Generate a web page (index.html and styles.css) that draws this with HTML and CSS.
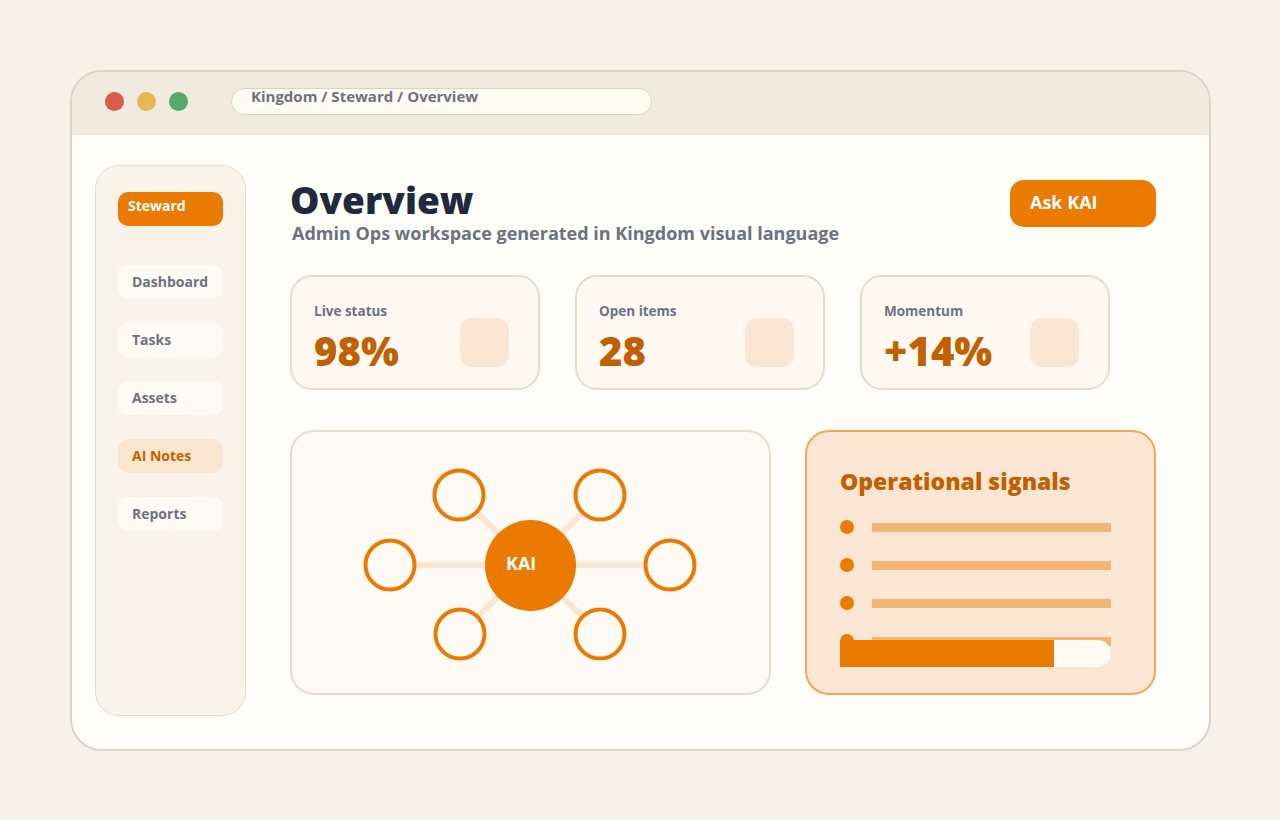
FILE: index.html
```html
<!DOCTYPE html>
<html lang="en">
<head>
    <meta charset="UTF-8">
    <meta name="viewport" content="width=device-width, initial-scale=1.0">
    <title>Kingdom / Steward / Overview</title>
    <link rel="stylesheet" href="styles.css">
</head>
<body>
    <div class="window">
        <div class="titlebar">
            <span class="dot red"></span>
            <span class="dot yellow"></span>
            <span class="dot green"></span>
            <div class="address">Kingdom / Steward / Overview</div>
        </div>
        <div class="workspace">
            <aside class="sidebar">
                <div class="brand">Steward</div>
                <nav class="nav">
                    <a class="nav-item">Dashboard</a>
                    <a class="nav-item">Tasks</a>
                    <a class="nav-item">Assets</a>
                    <a class="nav-item active">AI Notes</a>
                    <a class="nav-item">Reports</a>
                </nav>
            </aside>
            <main class="main">
                <header class="header">
                    <div>
                        <h1>Overview</h1>
                        <p class="subtitle">Admin Ops workspace generated in Kingdom visual language</p>
                    </div>
                    <button class="ask">Ask KAI</button>
                </header>

                <section class="stats">
                    <div class="stat">
                        <div>
                            <div class="stat-label">Live status</div>
                            <div class="stat-value">98%</div>
                        </div>
                        <div class="stat-icon"></div>
                    </div>
                    <div class="stat">
                        <div>
                            <div class="stat-label">Open items</div>
                            <div class="stat-value">28</div>
                        </div>
                        <div class="stat-icon"></div>
                    </div>
                    <div class="stat">
                        <div>
                            <div class="stat-label">Momentum</div>
                            <div class="stat-value">+14%</div>
                        </div>
                        <div class="stat-icon"></div>
                    </div>
                </section>

                <section class="lower">
                    <div class="graph">
                        <svg width="481" height="265" viewBox="0 0 481 265">
                            <g stroke="#fbe6d3" stroke-width="6">
                                <line x1="100" y1="135" x2="380" y2="135"/>
                                <line x1="240" y1="135" x2="169" y2="65"/>
                                <line x1="240" y1="135" x2="310" y2="65"/>
                                <line x1="240" y1="135" x2="170" y2="204"/>
                                <line x1="240" y1="135" x2="310" y2="204"/>
                            </g>
                            <g fill="#fffaf4" stroke="#ea7a00" stroke-width="4">
                                <circle cx="169" cy="65" r="24.5"/>
                                <circle cx="310" cy="65" r="24.5"/>
                                <circle cx="100" cy="135" r="24.5"/>
                                <circle cx="380" cy="135" r="24.5"/>
                                <circle cx="170" cy="204" r="24.5"/>
                                <circle cx="310" cy="204" r="24.5"/>
                            </g>
                            <circle cx="240.5" cy="135.5" r="45.5" fill="#ea7a00"/>
                            <text x="216" y="140" class="graph-label">KAI</text>
                        </svg>
                    </div>
                    <div class="signals">
                        <h2>Operational signals</h2>
                        <ul class="signal-list">
                            <li><span class="bullet"></span><span class="line"></span></li>
                            <li><span class="bullet"></span><span class="line"></span></li>
                            <li><span class="bullet"></span><span class="line"></span></li>
                            <li><span class="bullet"></span><span class="line"></span></li>
                        </ul>
                        <div class="progress"><div class="progress-fill" style="width: 79%"></div></div>
                    </div>
                </section>
            </main>
        </div>
    </div>
</body>
</html>
```

FILE: styles.css
```css
* {
    box-sizing: border-box;
}
body {
    margin: 0;
    padding: 70px 0 0 70px;
    background: #f6f2ea;
    font-family: "Open Sans", "Noto Sans", sans-serif;
    font-weight: 700;
}
.window {
    width: 1141px;
    height: 681px;
    border: 2px solid #dcd3c4;
    border-radius: 32px;
    background: #fffdf8;
    overflow: hidden;
}
.titlebar {
    height: 63px;
    background: #f1eade;
    display: flex;
    align-items: flex-start;
    padding: 20px 0 0 33px;
}
.dot {
    width: 19px;
    height: 19px;
    border-radius: 50%;
    margin-right: 13px;
}
.red { background: #dc5a4e; }
.yellow { background: #e6b84f; }
.green { background: #55a96a; }
.address {
    margin-left: 30px;
    margin-top: -4px;
    width: 421px;
    height: 27px;
    border: 1px solid #ddd2c0;
    border-radius: 14px;
    background: #fffaf2;
    padding: 0 0 0 19px;
    font-size: 15px;
    line-height: 14px;
    color: #6b7280;
}
.workspace {
    display: flex;
    padding: 30px 0 0 23px;
}
.sidebar {
    width: 151px;
    height: 551px;
    border: 1px solid #e6dccb;
    border-radius: 24px;
    background: #faf3ea;
    padding: 26px 0 0 22px;
}
.brand {
    width: 105px;
    height: 34px;
    border-radius: 10px;
    background: #ea7a00;
    color: #fff;
    font-size: 14px;
    line-height: 16px;
    padding: 6px 0 0 10px;
}
.nav {
    display: flex;
    flex-direction: column;
    gap: 24px;
    margin-top: 39px;
}
.nav-item {
    width: 105px;
    height: 34px;
    border-radius: 10px;
    background: #fffaf4;
    color: #6b7280;
    font-size: 14px;
    line-height: 34px;
    padding-left: 14px;
}
.nav-item.active {
    background: #fae5d0;
    color: #c26200;
}
.main {
    width: 866px;
    margin-left: 44px;
    padding-top: 15px;
}
.header {
    display: flex;
    justify-content: space-between;
    align-items: flex-start;
    height: 95px;
}
h1 {
    margin: 0 0 2px;
    font-size: 37px;
    line-height: 40px;
    font-weight: 800;
    color: #1f2a3d;
}
.subtitle {
    margin: 0 0 0 2px;
    font-size: 18px;
    line-height: 22px;
    color: #6b7280;
}
.ask {
    width: 146px;
    height: 47px;
    border: none;
    border-radius: 14px;
    background: #ea7a00;
    color: #fff;
    font-family: inherit;
    font-weight: 700;
    font-size: 18px;
    text-align: left;
    padding: 0 0 3px 20px;
}
.stats {
    display: flex;
    gap: 35px;
}
.stat {
    width: 250px;
    height: 115px;
    border: 2px solid #e6dccb;
    border-radius: 22px;
    background: #fff9f2;
    padding: 24px 29px 0 22px;
    display: flex;
    justify-content: space-between;
}
.stat-label {
    font-size: 13.5px;
    line-height: 20px;
    color: #6b7280;
}
.stat-value {
    font-size: 40px;
    line-height: 44px;
    margin-top: 8px;
    font-weight: 800;
    color: #c06000;
}
.stat-icon {
    width: 49px;
    height: 49px;
    margin-top: 17px;
    border-radius: 12px;
    background: #fbe6d3;
}
.lower {
    display: flex;
    gap: 34px;
    margin-top: 40px;
}
.graph {
    width: 481px;
    height: 265px;
    border: 2px solid #e6dccb;
    border-radius: 24px;
    background: #fffaf4;
    overflow: hidden;
}
.graph svg {
    display: block;
    margin: -2px;
}
.graph-label {
    fill: #fff;
    font-family: "Open Sans", sans-serif;
    font-weight: 700;
    font-size: 18px;
}
.signals {
    position: relative;
    width: 351px;
    height: 265px;
    border: 2px solid #f0a858;
    border-radius: 24px;
    background: #fae6d3;
    padding: 34px 0 0 33px;
}
h2 {
    margin: 0;
    font-size: 23px;
    line-height: 30px;
    font-weight: 800;
    color: #c06000;
}
.signal-list {
    list-style: none;
    margin: 24px 0 0;
    padding: 0;
    display: flex;
    flex-direction: column;
    gap: 24px;
}
.signal-list li {
    display: flex;
    align-items: center;
    height: 14px;
}
.bullet {
    width: 14px;
    height: 14px;
    border-radius: 50%;
    background: #ea7a00;
}
.line {
    width: 239px;
    height: 9px;
    margin-left: 18px;
    background: #f2b574;
}
.progress {
    position: absolute;
    left: 33px;
    top: 208px;
    width: 271px;
    height: 27px;
    border-radius: 0 14px 14px 0;
    background: #fffaf2;
}
.progress-fill {
    height: 100%;
    background: #ea7a00;
}
```
